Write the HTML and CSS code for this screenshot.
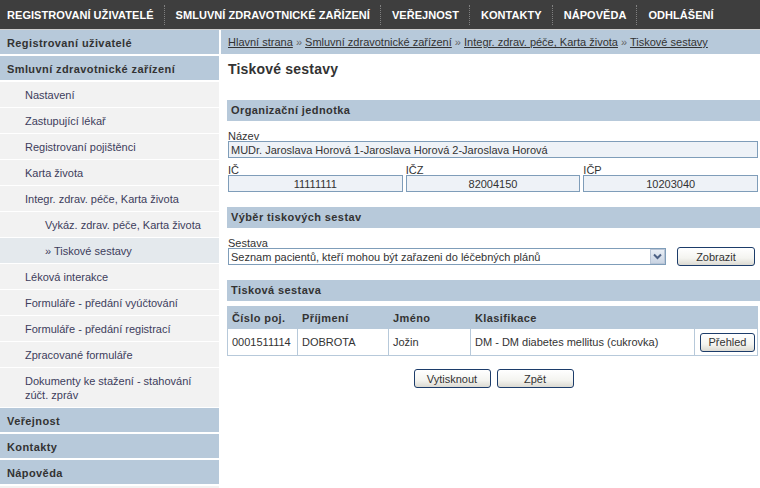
FILE: index.html
```html
<!DOCTYPE html>
<html lang="cs">
<head>
<meta charset="utf-8">
<title>Tiskové sestavy</title>
<link rel="stylesheet" href="styles.css">
</head>
<body>
<nav class="topnav">
  <a href="#">REGISTROVANÍ UŽIVATELÉ</a><span class="sep"></span>
  <a href="#">SMLUVNÍ ZDRAVOTNICKÉ ZAŘÍZENÍ</a><span class="sep"></span>
  <a href="#">VEŘEJNOST</a><span class="sep"></span>
  <a href="#">KONTAKTY</a><span class="sep"></span>
  <a href="#">NÁPOVĚDA</a><span class="sep"></span>
  <a href="#">ODHLÁŠENÍ</a>
</nav>
<div class="layout">
  <aside class="sidebar">
    <div class="side-head">Registrovaní uživatelé</div>
    <div class="side-head">Smluvní zdravotnické zařízení</div>
    <div class="side-item">Nastavení</div>
    <div class="side-item">Zastupující lékař</div>
    <div class="side-item">Registrovaní pojištěnci</div>
    <div class="side-item">Karta života</div>
    <div class="side-item">Integr. zdrav. péče, Karta života</div>
    <div class="side-item lvl2">Vykáz. zdrav. péče, Karta života</div>
    <div class="side-item lvl2 active">» Tiskové sestavy</div>
    <div class="side-item">Léková interakce</div>
    <div class="side-item">Formuláře - předání vyúčtování</div>
    <div class="side-item">Formuláře - předání registrací</div>
    <div class="side-item">Zpracované formuláře</div>
    <div class="side-item">Dokumenty ke stažení - stahování zúčt. zpráv</div>
    <div class="side-head">Veřejnost</div>
    <div class="side-head">Kontakty</div>
    <div class="side-head">Nápověda</div>
  </aside>
  <main class="main">
    <div class="crumbs">
      <a href="#">Hlavní strana</a> <span class="raquo">»</span> <a href="#">Smluvní zdravotnické zařízení</a> <span class="raquo">»</span> <a href="#">Integr. zdrav. péče, Karta života</a> <span class="raquo">»</span> <a href="#">Tiskové sestavy</a>
    </div>
    <div class="content">
      <h1 class="title">Tiskové sestavy</h1>

      <div class="bar">Organizační jednotka</div>
      <div class="fields">
        <div class="lbl">Název</div>
        <input class="inp" type="text" readonly value="MUDr. Jaroslava Horová 1-Jaroslava Horová 2-Jaroslava Horová">
        <div class="row3">
          <div>
            <div class="lbl">IČ</div>
            <input class="inp center" type="text" readonly value="11111111">
          </div>
          <div>
            <div class="lbl">IČZ</div>
            <input class="inp center" type="text" readonly value="82004150">
          </div>
          <div>
            <div class="lbl">IČP</div>
            <input class="inp center" type="text" readonly value="10203040">
          </div>
        </div>
      </div>

      <div class="bar gap">Výběr tiskových sestav</div>
      <div class="fields">
        <div class="lbl">Sestava</div>
        <div class="selrow">
          <div class="selwrap">
            <select class="sel">
              <option>Seznam pacientů, kteří mohou být zařazeni do léčebných plánů</option>
            </select>
            <span class="selarrow"><svg width="9" height="7" viewBox="0 0 9 7"><path d="M1 1.5 L4.5 5 L8 1.5" fill="none" stroke="#4d6185" stroke-width="2"/></svg></span>
          </div>
          <button class="btn btn-show" type="button">Zobrazit</button>
        </div>
      </div>

      <div class="bar gap2">Tisková sestava</div>
      <table class="grid">
        <thead>
          <tr><th class="c1">Číslo poj.</th><th class="c2">Příjmení</th><th class="c3">Jméno</th><th class="c4">Klasifikace</th><th class="c5"></th></tr>
        </thead>
        <tbody>
          <tr><td>0001511114</td><td>DOBROTA</td><td>Jožin</td><td>DM - DM diabetes mellitus (cukrovka)</td><td class="act"><button class="btn btn-small" type="button">Přehled</button></td></tr>
        </tbody>
      </table>

      <div class="actions">
        <button class="btn btn-act" type="button">Vytisknout</button>
        <button class="btn btn-act" type="button">Zpět</button>
      </div>
    </div>
  </main>
</div>
</body>
</html>
```

FILE: styles.css
```css
html, body {
  margin: 0;
  padding: 0;
}
body {
  font-family: "Liberation Sans", Arial, sans-serif;
  font-size: 11px;
  color: #333;
  background: #fff;
  width: 760px;
  height: 488px;
  overflow: hidden;
}

/* top navigation */
.topnav {
  display: flex;
  align-items: center;
  height: 29px;
  background: #3e3e3e;
  border-bottom: 1px solid #cfcfcf;
  padding-left: 7px;
}
.topnav a {
  color: #fff;
  font-weight: bold;
  font-size: 11px;
  letter-spacing: 0.05px;
  text-decoration: none;
  white-space: nowrap;
}
.sep {
  height: 20px;
  border-left: 1px dotted #808080;
  margin: 0 11px 0 10px;
}

/* layout */
.layout {
  display: grid;
  grid-template-columns: 219px 1fr;
  column-gap: 2px;
  height: 458px;
}

/* sidebar */
.sidebar {
  background: #f2f2f2;
  display: flex;
  flex-direction: column;
}
.side-head {
  background: #b7c9da;
  color: #333;
  font-weight: bold;
  letter-spacing: 0.4px;
  line-height: 14px;
  padding: 6px 7px 4px;
  border-bottom: 2px solid #fff;
}
.side-item {
  background: #f2f2f2;
  color: #3d3d5c;
  line-height: 14px;
  padding: 6px 10px 5px 25px;
  border-bottom: 1px solid #fff;
}
.side-item.lvl2 {
  padding-left: 45px;
}
.side-item.active {
  background: #e4e9ed;
}

/* main */
.crumbs {
  background: #b7c9da;
  height: 23px;
  line-height: 23px;
  padding: 1px 0 0 7px;
  white-space: nowrap;
}
.crumbs a {
  color: #333;
  text-decoration: underline;
}
.crumbs .raquo {
  color: #666;
}
.content {
  padding-left: 6px;
}
.title {
  font-size: 14px;
  font-weight: bold;
  letter-spacing: 0.2px;
  line-height: 17px;
  margin: 7px 0 22px 1px;
  color: #333;
}
.bar {
  background: #b7c9da;
  font-weight: bold;
  letter-spacing: 0.4px;
  height: 21px;
  line-height: 21px;
  padding-left: 4px;
  color: #333;
}
.bar.gap {
  margin-top: 15px;
}
.bar.gap2 {
  margin-top: 14px;
}
.fields {
  padding: 7px 2px 0 1px;
}
.lbl {
  line-height: 10px;
  padding-top: 3px;
  color: #333;
}
.inp {
  display: block;
  width: 100%;
  box-sizing: border-box;
  height: 17px;
  margin: 0;
  border: 1px solid #7f9db9;
  background: #eef2f7;
  font-family: "Liberation Sans", Arial, sans-serif;
  font-size: 11px;
  color: #333;
  padding: 0 2px;
}
.inp.center {
  text-align: center;
}
.row3 {
  display: grid;
  grid-template-columns: 1fr 1fr 1fr;
  column-gap: 3px;
  margin-top: 4px;
}

/* select row */
.selrow {
  display: flex;
  align-items: flex-start;
}
.selwrap {
  position: relative;
  width: 438px;
  height: 17px;
}
.sel {
  -webkit-appearance: none;
  appearance: none;
  width: 100%;
  height: 17px;
  box-sizing: border-box;
  border: 1px solid #7f9db9;
  background: #fff;
  font-family: "Liberation Sans", Arial, sans-serif;
  font-size: 11px;
  color: #333;
  padding: 0 2px;
  margin: 0;
  border-radius: 0;
}
.selarrow {
  position: absolute;
  right: 1px;
  top: 1px;
  width: 15px;
  height: 15px;
  box-sizing: border-box;
  border: 1px solid #b9c5d6;
  background: linear-gradient(#e9eef5, #c9d4e3);
  display: flex;
  align-items: center;
  justify-content: center;
}

/* buttons */
.btn {
  height: 19px;
  box-sizing: border-box;
  border: 1px solid #1c3c6a;
  border-radius: 3px;
  background: linear-gradient(#ffffff 0%, #f4f4f0 60%, #dcdad2 100%);
  font-family: "Liberation Sans", Arial, sans-serif;
  font-size: 11px;
  color: #333;
  padding: 0;
  margin: 0;
}
.btn-show {
  width: 78px;
  margin: -1px 0 0 11px;
}
.btn-small {
  width: 55px;
  height: 19px;
}
.btn-act {
  width: 77px;
}

/* table */
.grid {
  margin-top: 5px;
  width: 531px;
  border-collapse: collapse;
  table-layout: fixed;
}
.grid th {
  background: #b7c9da;
  font-weight: bold;
  letter-spacing: 0.4px;
  text-align: left;
  height: 21px;
  padding: 0 0 0 4px;
  color: #333;
  border: 1px solid #b7c9da;
}
.grid td {
  height: 26px;
  padding: 0 0 0 4px;
  border: 1px solid #b7c9da;
  color: #333;
  white-space: nowrap;
}
.grid .c1 { width: 65px; }
.grid .c2 { width: 86px; }
.grid .c3 { width: 77px; }
.grid .c4 { width: 219px; }
.grid td.act {
  padding-left: 5px;
}

.actions {
  display: flex;
  justify-content: center;
  gap: 6px;
  margin-top: 13px;
}
```
